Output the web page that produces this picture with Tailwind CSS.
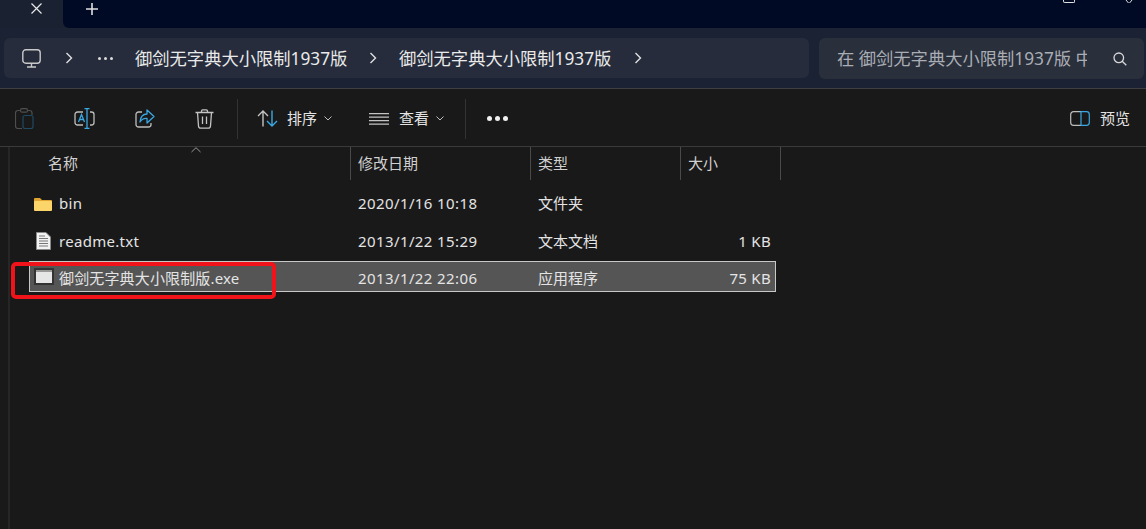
<!DOCTYPE html>
<html lang="zh-CN">
<head>
    <meta charset="UTF-8">
    <title>御剑无字典大小限制1937版</title>
    <script src="https://cdn.jsdelivr.net/npm/@tailwindcss/browser@4"></script>
</head>
<body class="bg-[#191919] overflow-hidden font-['Noto_Sans','Noto_Sans_CJK_SC',sans-serif]">
    <div class="relative w-[1146px] h-[529px] flex flex-col text-[#e4e4e4]">
        <!-- tab strip -->
        <div class="h-[28px] flex bg-[#1a2232]">
            <div class="w-[63px] pl-[31px] pt-[3px]">
                <svg class="w-[11px] h-[11px]" viewBox="0 0 11 11" fill="none" stroke="#e8e8e8" stroke-width="1.2"><path d="M.5.500 10.500 10.500M10.500.500 .5 10.500"/></svg>
            </div>
            <div class="flex-1 bg-[#000a24] rounded-bl-[6px] flex items-start">
                <div class="pl-[23px] pt-[3px]">
                    <svg class="w-[12px] h-[12px]" viewBox="0 0 12 12" fill="none" stroke="#e0e0e0" stroke-width="1.6"><path d="M6 0v12M0 6h12"/></svg>
                </div>
                <div class="ml-auto flex items-start pr-[11px] gap-[48px]">
                    <div class="w-[12px] h-[3px] border-b border-x border-[#e0e0e0] rounded-b-[2px]"></div>
                    <svg class="w-[12px] h-[3px]" viewBox="0 0 12 3" fill="none" stroke="#e0e0e0" stroke-width="1"><path d="M3 0 5.500 3M9 0 6.500 3"/></svg>
                </div>
            </div>
        </div>

        <!-- address row -->
        <div class="h-[61px] bg-[#1a2233] border-b border-[#3d3f42] flex items-start pt-[10px] pl-[4px] gap-[10px]">
            <div class="w-[805px] h-[40px] rounded-[6px] bg-[#262c3b] flex items-center text-[17.3px] text-[#eaeaea]">
                <svg class="ml-[18px] w-[19px] h-[19px]" viewBox="0 0 19 19" fill="none" stroke="#c9c9c9" stroke-width="1.4"><rect x="0.8" y="0.8" width="17.4" height="13.4" rx="3"/><path d="M9.500 14.500v3M5 18h9"/></svg>
                <svg class="ml-[24px] w-[8px] h-[12px]" viewBox="0 0 8 12" fill="none" stroke="#e0e0e0" stroke-width="1.4"><path d="M1.500 1 6.500 6 1.500 11"/></svg>
                <span class="ml-[25px] w-[15px] flex justify-between">
                    <i class="w-[3px] h-[3px] rounded-full bg-[#dcdcdc]"></i><i class="w-[3px] h-[3px] rounded-full bg-[#dcdcdc]"></i><i class="w-[3px] h-[3px] rounded-full bg-[#dcdcdc]"></i>
                </span>
                <span class="ml-[22px] w-[214px] pt-[1px] whitespace-nowrap">御剑无字典大小限制1937版</span>
                <svg class="ml-[20px] w-[8px] h-[12px]" viewBox="0 0 8 12" fill="none" stroke="#e0e0e0" stroke-width="1.4"><path d="M1.500 1 6.500 6 1.500 11"/></svg>
                <span class="ml-[22px] w-[213px] pt-[1px] whitespace-nowrap">御剑无字典大小限制1937版</span>
                <svg class="ml-[22px] w-[8px] h-[12px]" viewBox="0 0 8 12" fill="none" stroke="#e0e0e0" stroke-width="1.4"><path d="M1.500 1 6.500 6 1.500 11"/></svg>
            </div>
            <div class="w-[325px] h-[41px] rounded-[6px] bg-[#292f3b] flex items-center text-[17.3px] text-[#a9adb4]">
                <span class="ml-[18px] w-[250px] overflow-hidden whitespace-nowrap">在 御剑无字典大小限制1937版 中搜索</span>
                <svg class="ml-[26px] w-[14px] h-[14px]" viewBox="0 0 14 14" fill="none" stroke="#d8d8d8" stroke-width="1.3"><circle cx="5.800" cy="5.800" r="4.800"/><path d="M9.200 9.200 13.300 13.300"/></svg>
            </div>
        </div>

        <!-- toolbar -->
        <div class="h-[58px] pt-[2px] bg-[#191919] border-b border-[#3a3a3a] flex items-center text-[15px]">
            <svg class="ml-[15px] w-[19px] h-[21px]" viewBox="0 0 19 21" fill="none" stroke-width="1.200"><path d="M6 2.500H3a2.500 2.500 0 0 0-2.500 2.500v13A2.500 2.500 0 0 0 3 20.500h4" stroke="#4e4e4e"/><path d="M13 2.500h1.500A2.500 2.500 0 0 1 17 5v2" stroke="#4e4e4e"/><rect x="5.500" y="0.700" width="7" height="3.500" rx="1.500" stroke="#4e4e4e"/><rect x="8" y="7.500" width="10" height="13" rx="2" stroke="#1f4a63"/></svg>
            <svg class="ml-[40px] w-[21px] h-[21px]" viewBox="0 0 21 21" fill="none" stroke-width="1.300"><path d="M9 4H3.500A2.500 2.500 0 0 0 1 6.500v8A2.500 2.500 0 0 0 3.500 17H9M16 4h1.500A2.500 2.500 0 0 1 20 6.500v8a2.500 2.500 0 0 1-2.500 2.500H16" stroke="#bdbdbd"/><path d="M13 .7v19.600M10.500 .7h5M10.500 20.300h5" stroke="#3ba7e2"/><path d="M4.500 14 7.500 6.500 10.500 14M5.500 11.500h4" stroke="#3ba7e2"/></svg>
            <svg class="ml-[40px] w-[20px] h-[20px]" viewBox="0 0 20 20" fill="none" stroke-width="1.300"><path d="M7 3H3.500A2.500 2.500 0 0 0 1 5.500v10A2.500 2.500 0 0 0 3.500 18h10a2.500 2.500 0 0 0 2.500-2.500V14" stroke="#bdbdbd"/><path d="M12 1v4C8 5 5.500 8 5 13c2-3 4-4 7-3.500V14l7-6.500z" stroke="#3ba7e2" stroke-linejoin="round"/></svg>
            <svg class="ml-[40px] w-[19px] h-[20px]" viewBox="0 0 19 20" fill="none" stroke="#c4c4c4" stroke-width="1.300"><path d="M.5 3.500h18M6.500 3.500V2A1.200 1.200 0 0 1 7.700.8h3.600A1.200 1.200 0 0 1 12.500 2v1.500M2.500 3.500 3.500 17a2.300 2.300 0 0 0 2.300 2.200h7.400a2.300 2.300 0 0 0 2.300-2.200l1-13.500M7.500 7.500v7.500M11.500 7.500v7.500"/></svg>
            <div class="ml-[23px] w-px h-[40px] bg-[#333333]"></div>
            <svg class="ml-[19px] w-[21px] h-[17px]" viewBox="0 0 21 17" fill="none" stroke-width="1.400"><path d="M6 16.500V1M1 6l5-5 5 5" stroke="#c4c4c4"/><path d="M15 .5V16M10 11l5 5 5-5" stroke="#3ba7e2"/></svg>
            <span class="ml-[9px]">排序</span>
            <svg class="ml-[7px] w-[8px] h-[5px]" viewBox="0 0 8 5" fill="none" stroke="#bdbdbd" stroke-width="1"><path d="M.5 .5 4 4 7.500 .5"/></svg>
            <svg class="ml-[37px] w-[20px] h-[12px]" viewBox="0 0 20 12" fill="none" stroke="#c4c4c4" stroke-width="1.300"><path d="M0 .7h20M0 4.200h20M0 7.700h20M0 11.200h20"/></svg>
            <span class="ml-[10px]">查看</span>
            <svg class="ml-[7px] w-[8px] h-[5px]" viewBox="0 0 8 5" fill="none" stroke="#bdbdbd" stroke-width="1"><path d="M.5 .5 4 4 7.500 .5"/></svg>
            <div class="ml-[21px] w-px h-[40px] bg-[#333333]"></div>
            <span class="ml-[21px] w-[21px] flex justify-between">
                <i class="w-[5px] h-[5px] rounded-full bg-[#f0f0f0]"></i><i class="w-[5px] h-[5px] rounded-full bg-[#f0f0f0]"></i><i class="w-[5px] h-[5px] rounded-full bg-[#f0f0f0]"></i>
            </span>
            <svg class="ml-auto w-[20px] h-[15px]" viewBox="0 0 20 15" fill="none" stroke-width="1.200"><path d="M11 .7H3.500A2.800 2.800 0 0 0 .7 3.500v8a2.800 2.800 0 0 0 2.800 2.800H11" stroke="#bdbdbd"/><path d="M11 .7h5.500a2.800 2.800 0 0 1 2.800 2.800v8a2.800 2.800 0 0 1-2.800 2.800H11z" stroke="#3ba7e2"/></svg>
            <span class="ml-[10px] mr-[16px]">预览</span>
        </div>

        <!-- list -->
        <div class="flex-1 flex text-[15px]">
            <div class="w-[2px] ml-[8px] bg-[#262626]"></div>
            <div class="flex-1 relative">
                <!-- column header -->
                <div class="h-[33px] flex items-center text-[#d0d0d0] relative">
                    <div class="w-[341px] h-full flex items-center pl-[38px] border-r border-[#4a4a4a]">名称</div>
                    <div class="w-[180px] h-full flex items-center pl-[7px] border-r border-[#4a4a4a]">修改日期</div>
                    <div class="w-[150px] h-full flex items-center pl-[7px] border-r border-[#4a4a4a]">类型</div>
                    <div class="w-[100px] h-full flex items-center pl-[7px] border-r border-[#4a4a4a]">大小</div>
                    <svg class="absolute left-[181px] top-0 w-[10px] h-[6px]" viewBox="0 0 10 6" fill="none" stroke="#9a9a9a" stroke-width="1"><path d="M.5 5 5 .7 9.500 5"/></svg>
                </div>

                <!-- rows -->
                <div class="pt-[8px] pl-[19px] flex flex-col gap-[6px]">
                    <div class="w-[747px] h-[31px] flex items-center">
                        <div class="w-[30px] flex justify-center pr-[2px]">
                            <svg class="w-[18px] h-[14px]" viewBox="0 0 18 14"><path d="M0 2a1 1 0 0 1 1-1h5l2 2h9a1 1 0 0 1 1 1v1H0z" fill="#e0a530"/><rect y="4" width="18" height="10" rx="1" fill="#fbd46a"/></svg>
                        </div>
                        <div class="w-[299px] tracking-[0.3px]">bin</div>
                        <div class="w-[180px] tracking-[0.4px]">2020/1/16 10:18</div>
                        <div class="w-[143px]">文件夹</div>
                    </div>
                    <div class="w-[747px] h-[31px] flex items-center">
                        <div class="w-[30px] flex justify-center pr-[2px]">
                            <svg class="w-[15px] h-[18px]" viewBox="0 0 15 18"><path d="M.5.5H10L14.500 5v12.500H.5z" fill="#f2f2f2" stroke="#8a8a8a"/><path d="M3 4h6M3 6.500h9M3 9h9M3 11.500h9M3 14h9" stroke="#777777"/></svg>
                        </div>
                        <div class="w-[299px] pt-[2px] tracking-[0.3px]">readme.txt</div>
                        <div class="w-[180px] pt-[2px] tracking-[0.4px]">2013/1/22 15:29</div>
                        <div class="w-[143px] pt-[2px]">文本文档</div>
                        <div class="w-[90px] pt-[2px] text-right tracking-[0.3px]">1 KB</div>
                    </div>
                    <div class="w-[747px] h-[31px] flex items-center bg-[#555555] border border-[#c8c8c8] -mt-[1px]">
                        <div class="w-[29px] flex justify-center pr-[2px]">
                            <svg class="w-[20px] h-[17px]" viewBox="0 0 20 17"><rect x="1" y="1" width="18" height="15" fill="#e6e6e6" stroke="#333333" stroke-width="2"/><rect x="2" y="2" width="16" height="2" fill="#999999"/></svg>
                        </div>
                        <div class="w-[299px] pt-[4px] whitespace-nowrap tracking-[0.15px]">御剑无字典大小限制版.exe</div>
                        <div class="w-[180px] pt-[4px] tracking-[0.4px]">2013/1/22 22:06</div>
                        <div class="w-[143px] pt-[4px]">应用程序</div>
                        <div class="w-[90px] pt-[4px] text-right tracking-[0.3px]">75 KB</div>
                    </div>
                </div>

                <!-- red annotation -->
                <div class="absolute left-[1px] top-[115px] w-[265px] h-[37px] border-[4px] border-[#f0141a] rounded-[5px]"></div>
            </div>
        </div>
    </div>
</body>
</html>
